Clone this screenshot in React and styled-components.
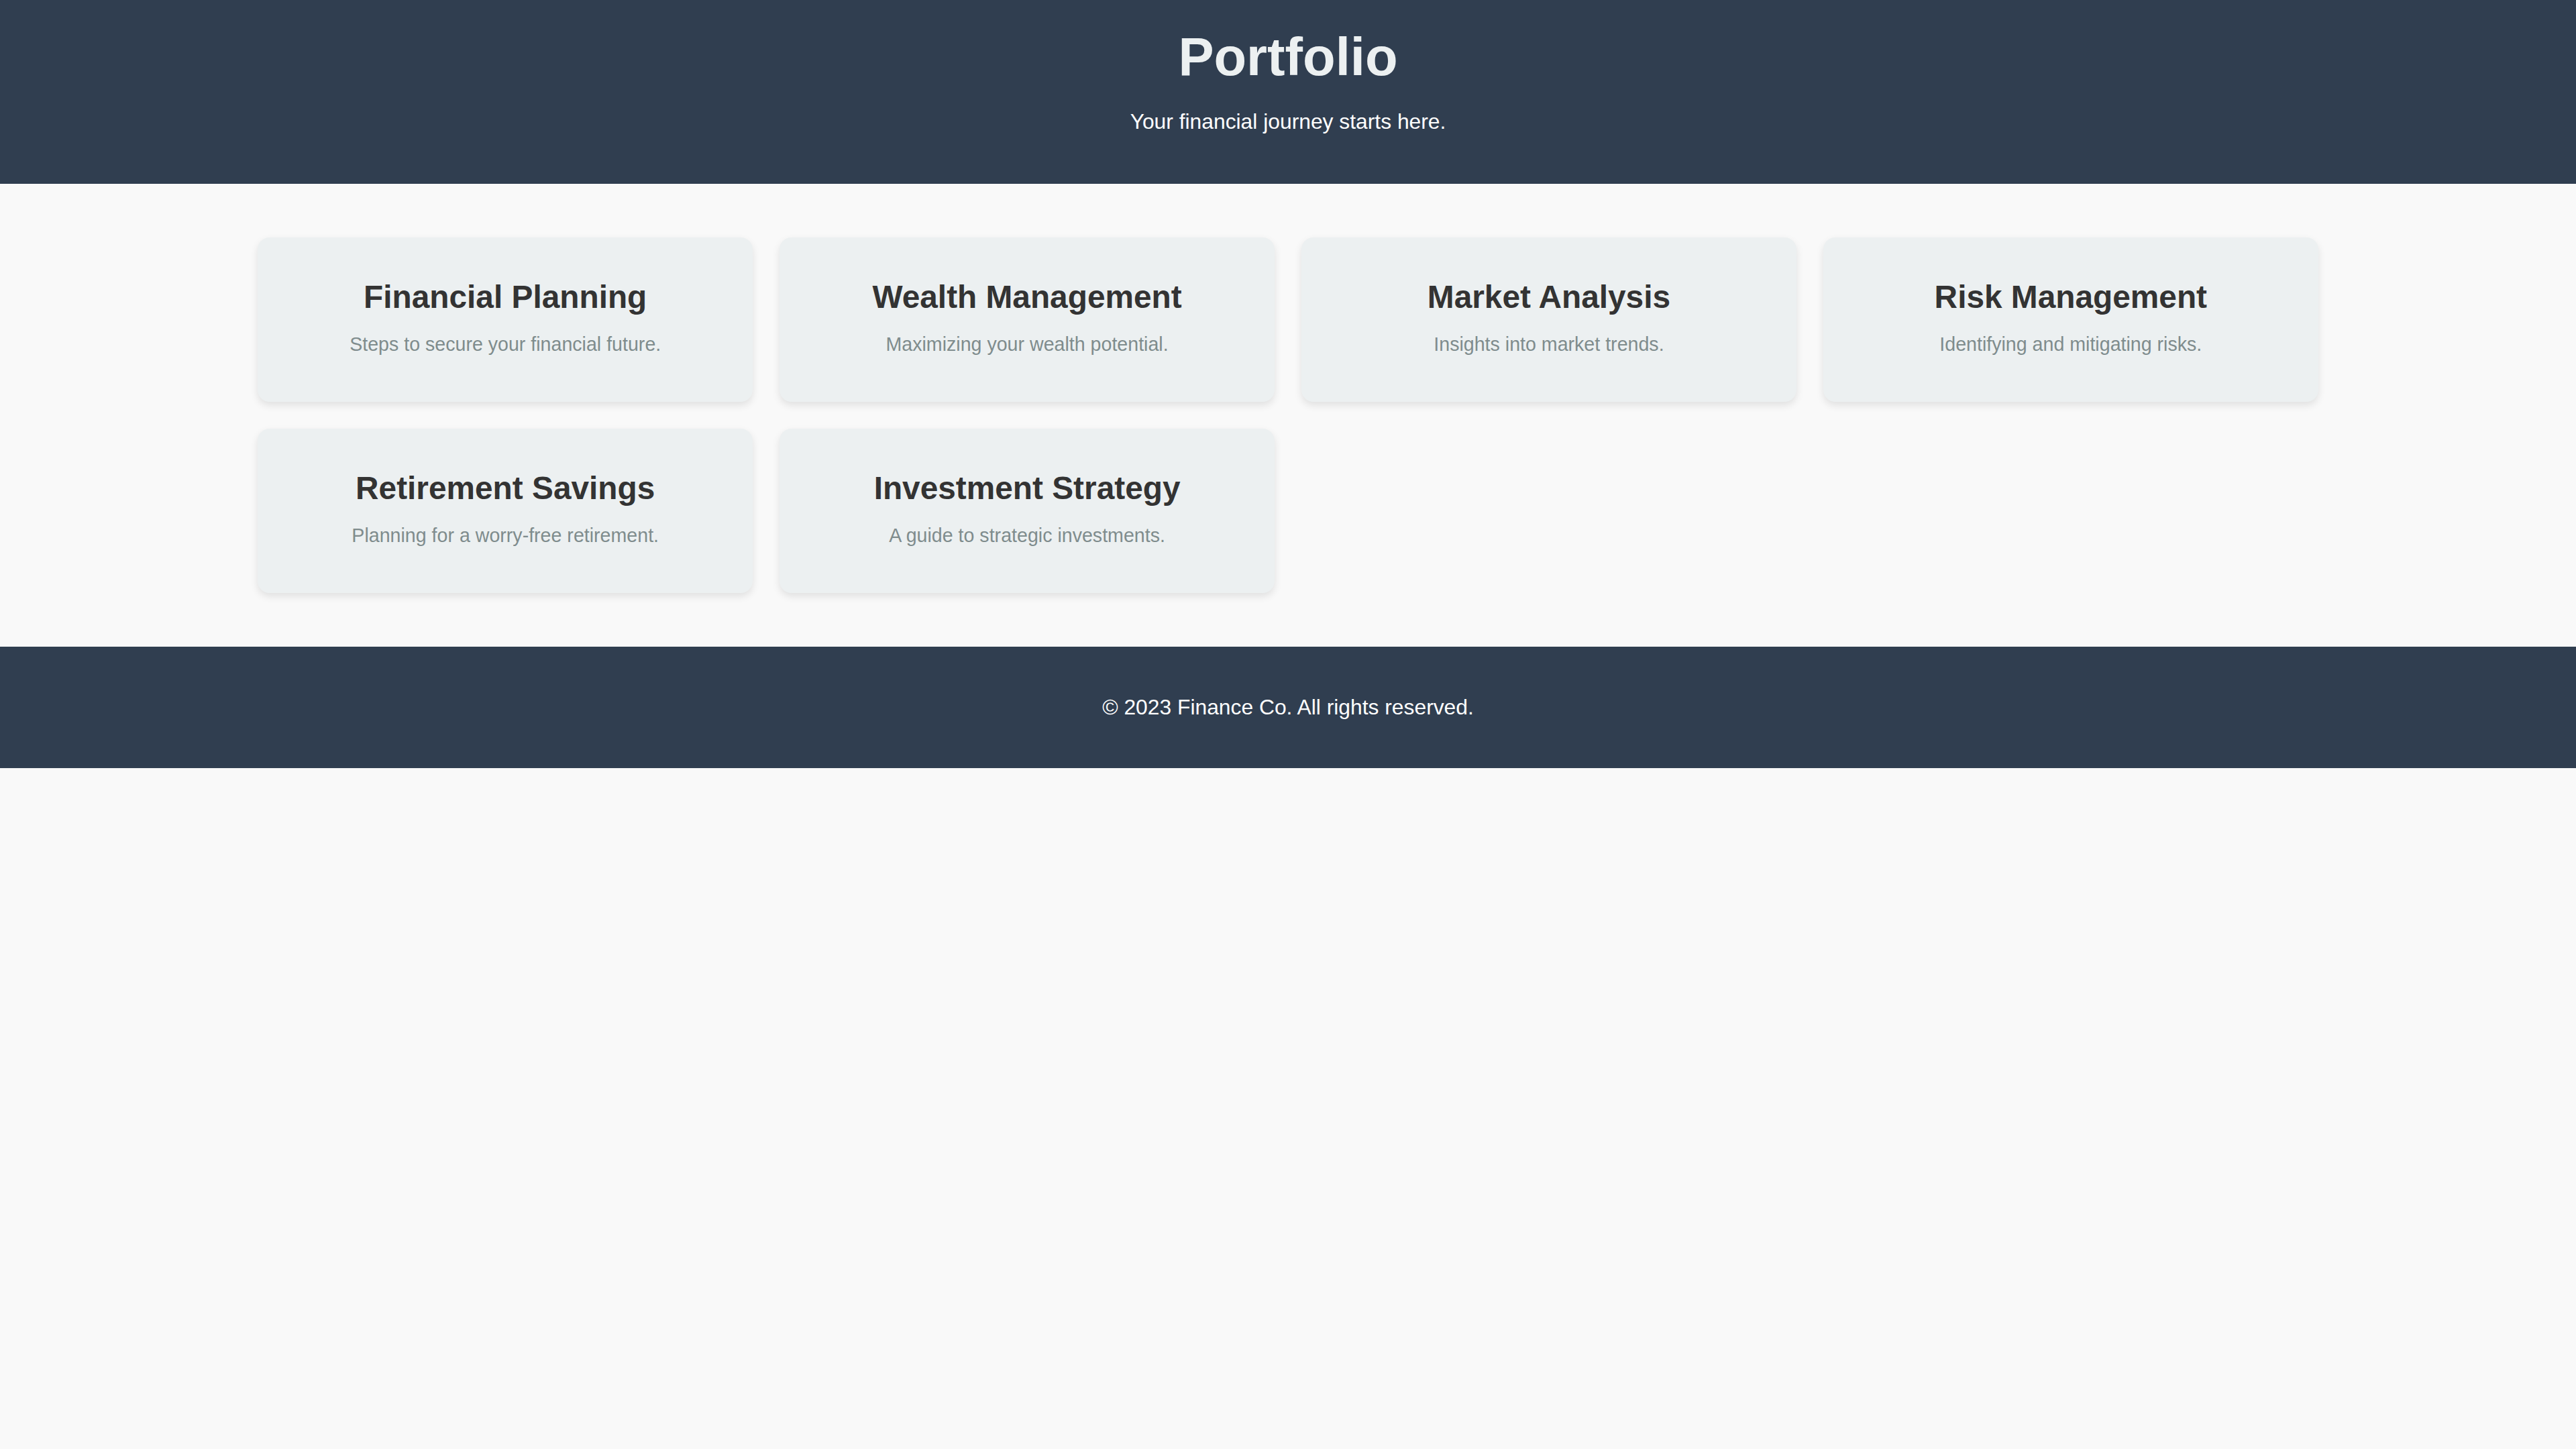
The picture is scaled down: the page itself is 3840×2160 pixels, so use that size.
import React from "react";
import styled, { createGlobalStyle } from "styled-components";

const GlobalStyle = createGlobalStyle`
  html, body {
    margin: 0;
    padding: 0;
  }
  body {
    background: #f9f9f9;
    font-family: "Liberation Sans", Arial, sans-serif;
    color: #333333;
  }
`;

const Header = styled.header`
  background: #303e50;
  color: #ffffff;
  text-align: center;
  padding: 39px 0 42px;
`;

const Title = styled.h1`
  margin: 0;
  font-size: 79.6px;
  font-weight: 700;
  line-height: normal;
  color: #ecf0f1;
`;

const Tagline = styled.p`
  margin: 32px 0;
  font-size: 31.8px;
  line-height: normal;
  color: #ffffff;
`;

const Main = styled.main`
  padding: 80px 0;
`;

const Grid = styled.section`
  width: 80%;
  margin: 0 auto;
  display: grid;
  grid-template-columns: repeat(4, 1fr);
  column-gap: 39.5px;
  row-gap: 40px;
`;

const Card = styled.article`
  background: #ecf0f1;
  border-radius: 18px;
  box-shadow: 0 5px 12px rgba(0, 0, 0, 0.1);
  text-align: center;
  padding: 61px 39px 69px;
`;

const CardTitle = styled.h2`
  margin: 0 0 27px;
  font-size: 47.8px;
  font-weight: 700;
  line-height: normal;
  color: #333333;
`;

const CardText = styled.p`
  margin: 0;
  font-size: 28.6px;
  line-height: normal;
  color: #7f8c8d;
`;

const Footer = styled.footer`
  background: #303e50;
  color: #ffffff;
  text-align: center;
  padding: 72px 0;
`;

const FooterText = styled.p`
  margin: 0;
  font-size: 31.8px;
  line-height: normal;
`;

const items = [
  { title: "Financial Planning", text: "Steps to secure your financial future." },
  { title: "Wealth Management", text: "Maximizing your wealth potential." },
  { title: "Market Analysis", text: "Insights into market trends." },
  { title: "Risk Management", text: "Identifying and mitigating risks." },
  { title: "Retirement Savings", text: "Planning for a worry-free retirement." },
  { title: "Investment Strategy", text: "A guide to strategic investments." },
];

export default function App() {
  return (
    <>
      <GlobalStyle />
      <Header>
        <Title>Portfolio</Title>
        <Tagline>Your financial journey starts here.</Tagline>
      </Header>
      <Main>
        <Grid>
          {items.map((item) => (
            <Card key={item.title}>
              <CardTitle>{item.title}</CardTitle>
              <CardText>{item.text}</CardText>
            </Card>
          ))}
        </Grid>
      </Main>
      <Footer>
        <FooterText>© 2023 Finance Co. All rights reserved.</FooterText>
      </Footer>
    </>
  );
}
